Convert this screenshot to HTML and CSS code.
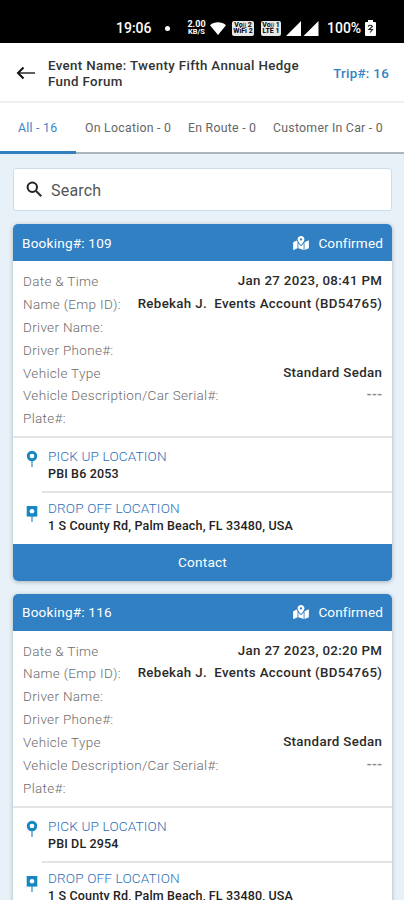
FILE: index.html
```html
<!DOCTYPE html>
<html lang="en">
<head>
<meta charset="utf-8">
<title>Trip bookings</title>
<link rel="stylesheet" href="styles.css">
</head>
<body>
<svg width="0" height="0" class="defs">
  <symbol id="map" viewBox="0 0 576 512"><path fill="currentColor" d="M288 0c-70 0-126 56-126 126 0 56 82 158 114 196 6 8 18 8 24 0 32-38 114-140 114-196C414 56 358 0 288 0zm0 168a42 42 0 1 1 0-84 42 42 0 0 1 0 84zM20 216A32 32 0 0 0 0 246v250c0 11 11 19 22 15l138-63V215c-9-16-16-32-21-47L20 216zm268 144c-14 0-28-6-37-17-19-23-40-50-59-76v181l192 64V267c-19 27-40 53-59 76-9 11-23 17-37 17zm266-199-138 63v288l140-56a32 32 0 0 0 20-30V176c0-11-11-19-22-15z"/></symbol>
  <symbol id="pin" viewBox="0 0 12 18"><path d="M6 10v7" stroke="#4a9bc9" stroke-width="1.4"/><circle cx="6" cy="6" r="3.8" fill="#fff" stroke="#1886c0" stroke-width="2.9"/></symbol>
  <symbol id="drop" viewBox="0 0 12 18"><path d="M6 11v6" stroke="#4a9bc9" stroke-width="1.4"/><path d="M.7 1h10.6v10.6H.7z" fill="#1886c0"/><circle cx="6" cy="6.3" r="2.3" fill="#fff"/></symbol>
</svg>
<div class="status">
  <span class="time">19:06</span>
  <span class="dot"></span>
  <span class="rate"><b>2.00</b><b>KB/S</b></span>
  <svg class="wifi" width="16" height="13" viewBox="0 0 16 13"><path fill="#fff" d="M8 13 0 3.2C4.500-.6 11.500-.6 16 3.200z"/></svg>
  <span class="volte wide"><b>Vo<i>))</i> 2</b><b>WiFi 2</b></span>
  <span class="volte"><b>Vo<i>))</i> 1</b><b>LTE 1</b></span>
  <svg class="signal" width="33" height="15" viewBox="0 0 33 15"><path fill="#fff" d="M0 15 15 0v15zM17.500 15 32.500 0v15z"/></svg>
  <span class="percent">100%</span>
  <svg class="battery" width="11" height="16" viewBox="0 0 11 16"><path fill="#fff" d="M3 2V0h5v2h2a1 1 0 0 1 1 1v12a1 1 0 0 1-1 1H1a1 1 0 0 1-1-1V3a1 1 0 0 1 1-1z"/><path d="M3 6.500Q5.500 4 7.500 6.500L4 9.500h3.500L5 12.500" fill="none" stroke="#222" stroke-width="1.100"/></svg>
</div>
<header class="top">
  <svg class="back" width="20" height="14" viewBox="0 0 20 14"><path d="M2 7h17" stroke="#444" stroke-width="1.700"/><path d="M7.500 1.500 2 7l5.500 5.500" fill="none" stroke="#111" stroke-width="2"/></svg>
  <h1>Event Name: Twenty Fifth Annual Hedge<br>Fund Forum</h1>
  <span class="trip">Trip#: 16</span>
</header>
<nav class="tabs">
  <a class="tab active">All - 16</a>
  <a class="tab location">On Location - 0</a>
  <a class="tab route">En Route - 0</a>
  <a class="tab customer">Customer In Car - 0</a>
</nav>
<main>
  <div class="search">
    <svg width="17" height="17" viewBox="0 0 17 17"><circle cx="6.300" cy="6.300" r="4.700" fill="none" stroke="#222" stroke-width="2"/><path d="m9.800 9.800 5.500 5.500" stroke="#333" stroke-width="2.200"/></svg>
    <span>Search</span>
  </div>
  <section class="card">
    <div class="head"><span class="booking">Booking#: 109</span><svg width="16" height="14"><use href="#map"/></svg><span class="state">Confirmed</span></div>
    <dl>
      <div><dt>Date &amp; Time</dt><dd>Jan 27 2023, 08:41 PM</dd></div>
      <div><dt>Name (Emp ID):</dt><dd>Rebekah J.&nbsp; Events Account (BD54765)</dd></div>
      <div><dt>Driver Name:</dt></div>
      <div><dt>Driver Phone#:</dt></div>
      <div><dt>Vehicle Type</dt><dd>Standard Sedan</dd></div>
      <div><dt>Vehicle Description/Car Serial#:</dt><dd class="none">---</dd></div>
      <div><dt>Plate#:</dt></div>
    </dl>
    <div class="place"><svg width="12" height="18"><use href="#pin"/></svg><div class="where"><h2>PICK UP LOCATION</h2><p>PBI B6 2053</p></div></div>
    <div class="place last"><svg width="12" height="18"><use href="#drop"/></svg><div class="where"><h2>DROP OFF LOCATION</h2><p>1 S County Rd, Palm Beach, FL 33480, USA</p></div></div>
    <div class="contact">Contact</div>
  </section>
  <section class="card">
    <div class="head"><span class="booking">Booking#: 116</span><svg width="16" height="14"><use href="#map"/></svg><span class="state">Confirmed</span></div>
    <dl>
      <div><dt>Date &amp; Time</dt><dd>Jan 27 2023, 02:20 PM</dd></div>
      <div><dt>Name (Emp ID):</dt><dd>Rebekah J.&nbsp; Events Account (BD54765)</dd></div>
      <div><dt>Driver Name:</dt></div>
      <div><dt>Driver Phone#:</dt></div>
      <div><dt>Vehicle Type</dt><dd>Standard Sedan</dd></div>
      <div><dt>Vehicle Description/Car Serial#:</dt><dd class="none">---</dd></div>
      <div><dt>Plate#:</dt></div>
    </dl>
    <div class="place"><svg width="12" height="18"><use href="#pin"/></svg><div class="where"><h2>PICK UP LOCATION</h2><p>PBI DL 2954</p></div></div>
    <div class="place last"><svg width="12" height="18"><use href="#drop"/></svg><div class="where"><h2>DROP OFF LOCATION</h2><p>1 S County Rd, Palm Beach, FL 33480, USA</p></div></div>
  </section>
</main>
</body>
</html>
```
FILE: styles.css
```css
* { box-sizing: border-box; margin: 0; padding: 0; }
html, body { height: 900px; overflow: hidden; }
body { width: 404px; background: #e8f1f7; font-family: Roboto, sans-serif; color: #222; white-space: nowrap; }
.defs { position: absolute; }

.status { height: 43px; background: #000; color: #fff; display: flex; align-items: center; padding: 13px 0 0 116px; }
.time { font-size: 14px; font-weight: 500; width: 49px; }
.dot { width: 5px; height: 5px; border-radius: 50%; background: #fff; margin-right: 17px; }
.rate { width: 19px; margin-right: 4px; text-align: center; }
.rate b { display: block; font-size: 7.5px; line-height: 7.5px; }
.rate b:first-child { font-size: 9px; }
.volte { width: 20px; height: 15px; background: #e8e8e8; color: #000; border-radius: 2px; margin-right: 5px; padding-top: 1px; text-align: center; overflow: hidden; }
.volte b { display: block; font-size: 7px; line-height: 6.5px; }
.volte i { font-size: 5px; line-height: 5px; }
.volte.wide { width: 22px; margin-right: 7px; }
.wifi { margin-right: 6px; }
.signal { margin-right: 8px; }
.percent { font-size: 14px; font-weight: 500; width: 38px; }

.top { height: 60px; background: #fff; border-bottom: 2px solid #efefef; display: flex; align-items: center; padding: 3px 15px 0 16px; }
.back { margin: -2px 12px 0 0; }
h1 { font-size: 13.3px; line-height: 16px; font-weight: 500; letter-spacing: 0.34px; flex: 1; color: #333; }
.trip { font-size: 13.3px; font-weight: 500; letter-spacing: 0.3px; color: #3482c3; }

.tabs { height: 51px; background: #fff; border-bottom: 2px solid #a9b5ba; display: flex; line-height: 51px; font-size: 12.3px; color: #666; letter-spacing: 0.26px; }
.tab { height: 51px; }
.tab.active { width: 76px; padding-left: 18px; color: #3d83c9; border-bottom: 3px solid #3180c0; margin-right: 9px; }
.location { width: 103px; }
.route { width: 85px; }

main { padding: 14px 12px 0 13px; }
.search { height: 43px; background: #fff; border: 1px solid #cbdcea; border-radius: 3px; display: flex; align-items: center; gap: 8px; padding: 1px 0 0 12px; margin-bottom: 13px; font-size: 16px; color: #555; letter-spacing: 0.2px; }
.search svg { margin-top: -1px; }

.card { background: #fff; border-radius: 5px; overflow: hidden; box-shadow: 0 1px 4px rgba(60, 80, 100, 0.4); margin-bottom: 13px; }
.head { height: 37px; background: #3080c3; color: #fff; display: flex; align-items: center; padding: 0 9px; font-size: 13.6px; letter-spacing: 0.2px; }
.booking { flex: 1; }
.head svg { margin-right: 9px; }
.state { letter-spacing: 0.12px; }
dl { height: 177px; padding: 9px 10px 0; font-size: 13.5px; border-bottom: 2px solid #e2e4e6; }
dl div { display: flex; justify-content: space-between; height: 22.9px; line-height: 22.8px; }
dt { color: #6c6c6c; font-weight: 300; letter-spacing: 0.32px; }
dd { font-size: 13.3px; color: #2a2a2a; font-weight: 500; letter-spacing: 0.34px; margin-right: -0.3px; }
dd.none { color: #888; font-weight: 700; letter-spacing: 0; }
.place { display: flex; height: 55px; padding-left: 13px; }
.place svg { margin: 12px 4px 0 0; }
.where { flex: 1; padding: 9px 0 0 6px; border-bottom: 2px solid #e2e4e6; }
.place.last { height: 51px; }
.last .where { padding-top: 6px; border: 0; }
h2 { font-size: 13.6px; line-height: 18px; font-weight: 300; letter-spacing: 0.15px; color: #2f70ba; }
p { font-size: 12.5px; line-height: 18px; font-weight: 500; color: #222; letter-spacing: 0.15px; }
.contact { height: 36.5px; line-height: 37px; text-align: center; background: #3080c3; color: #fff; font-size: 13.6px; letter-spacing: 0.2px; }
```
